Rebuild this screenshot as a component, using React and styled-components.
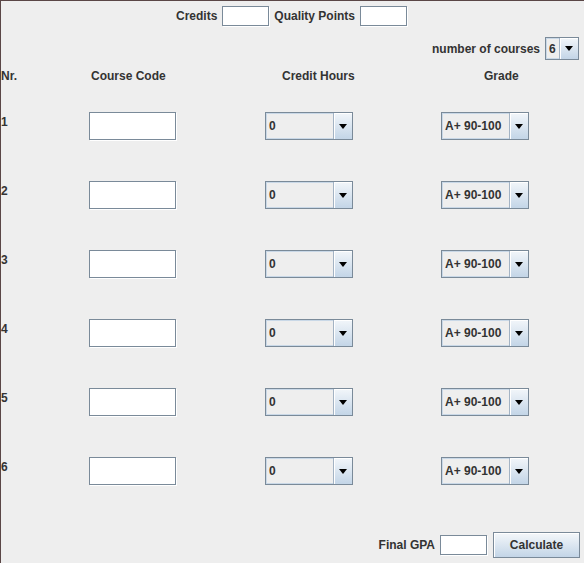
import React from 'react';
import styled, { createGlobalStyle } from 'styled-components';

const GlobalStyle = createGlobalStyle`
	html, body {
		margin: 0;
		padding: 0;
		background: #eeeeee;
	}
	* {
		box-sizing: border-box;
	}
`;

const Frame = styled.div`
	width: 584px;
	height: 563px;
	display: flex;
	flex-direction: column;
	background: #eeeeee;
	border-top: 1px solid #5a4646;
	border-left: 1px solid #5a4646;
	font-family: 'Liberation Sans', Arial, sans-serif;
	font-weight: bold;
	font-size: 12px;
	color: #333333;
	overflow: hidden;
`;

const TopRow = styled.div`
	display: flex;
	justify-content: center;
	align-items: center;
	gap: 5px;
	padding-top: 5px;
	padding-right: 2px;
	height: 25px;
`;

const CoursesRow = styled.div`
	display: flex;
	justify-content: flex-end;
	align-items: center;
	gap: 5px;
	margin-top: 11px;
	padding-right: 5px;
	height: 23px;
`;

const Label = styled.span`
	line-height: 14px;
	white-space: nowrap;
`;

const TextBox = styled.input`
	width: ${p => p.$w || 47}px;
	height: ${p => p.$h || 20}px;
	margin: 0;
	padding: 0 3px;
	border: 1px solid #7a8a99;
	box-shadow: 1px 1px 0 #ffffff;
	background: #ffffff;
	font: inherit;
	outline: none;
`;

const Grid = styled.div`
	display: grid;
	grid-template-columns: 88px 176px 176px 1fr;
`;

const Header = styled(Grid)`
	margin-top: 8px;
	height: 16px;
	align-items: center;
`;

const HeadCell = styled.span`
	padding-left: ${p => p.$indent || 0}px;
	line-height: 14px;
	white-space: nowrap;
`;

const Rows = styled.div`
	margin-top: 7px;
	display: flex;
	flex-direction: column;
`;

const Row = styled(Grid)`
	height: 69px;
	padding-top: 21px;
	align-items: start;
`;

const RowNumber = styled.span`
	margin-top: 3px;
	line-height: 14px;
`;

const Combo = styled.div`
	display: flex;
	width: ${p => p.$w}px;
	height: ${p => p.$h}px;
	border: 1px solid #7a8a99;
	background: #eeeeee;
`;

const ComboValue = styled.div`
	flex: 1;
	display: flex;
	align-items: center;
	padding-left: 2px;
	border: 1px solid #c9d8e7;
	border-right: none;
	white-space: nowrap;
	overflow: hidden;
`;

const ArrowButton = styled.div`
	width: 19px;
	display: flex;
	align-items: center;
	justify-content: center;
	border-left: 1px solid #a3b3c4;
	background: linear-gradient(#f2f6fa, #c3d5e7);
	box-shadow: inset 1px 1px 0 #ffffff;
`;

const Arrow = styled.span`
	width: 0;
	height: 0;
	border-left: 4px solid transparent;
	border-right: 4px solid transparent;
	border-top: 5px solid #000000;
`;

const BottomRow = styled.div`
	margin-top: auto;
	display: flex;
	justify-content: flex-end;
	align-items: center;
	gap: 5px;
	padding-right: 4px;
	padding-bottom: 5px;
`;

const Button = styled.button`
	margin-left: 1px;
	width: 87px;
	height: 26px;
	border: 1px solid #7a8a99;
	background: linear-gradient(#f4f7fa, #c3d5e7);
	box-shadow: inset 1px 1px 0 #ffffff;
	font: inherit;
	color: #333333;
	padding: 0;
	cursor: pointer;
`;

function ComboBox({ value, width, height }) {
	return (
		<Combo $w={width} $h={height}>
			<ComboValue>{value}</ComboValue>
			<ArrowButton>
				<Arrow />
			</ArrowButton>
		</Combo>
	);
}

export default function App() {
	const courses = [1, 2, 3, 4, 5, 6];
	return (
		<>
			<GlobalStyle />
			<Frame>
				<TopRow>
					<Label>Credits</Label>
					<TextBox />
					<Label>Quality Points</Label>
					<TextBox />
				</TopRow>
				<CoursesRow>
					<Label>number of courses</Label>
					<ComboBox value="6" width={34} height={23} />
				</CoursesRow>
				<Header>
					<HeadCell>Nr.</HeadCell>
					<HeadCell $indent={2}>Course Code</HeadCell>
					<HeadCell $indent={17}>Credit Hours</HeadCell>
					<HeadCell $indent={43}>Grade</HeadCell>
				</Header>
				<Rows>
					{courses.map(n => (
						<Row key={n}>
							<RowNumber>{n}</RowNumber>
							<TextBox $w={87} $h={28} />
							<ComboBox value="0" width={88} height={28} />
							<ComboBox value="A+ 90-100" width={88} height={28} />
						</Row>
					))}
				</Rows>
				<BottomRow>
					<Label>Final GPA</Label>
					<TextBox />
					<Button>Calculate</Button>
				</BottomRow>
			</Frame>
		</>
	);
}
